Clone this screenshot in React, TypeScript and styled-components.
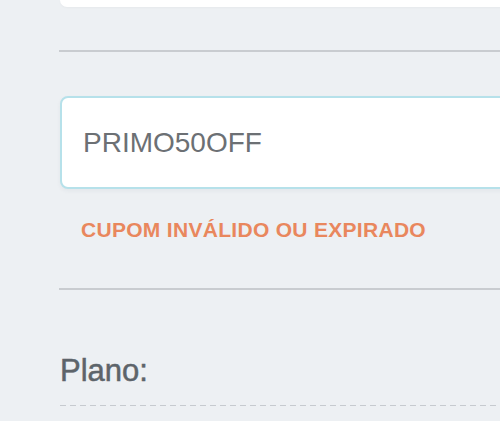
import styled, { createGlobalStyle } from 'styled-components';

const GlobalStyle = createGlobalStyle`
  html, body {
    margin: 0;
    padding: 0;
    background: #edf0f3;
  }
  body {
    font-family: 'Liberation Sans', Arial, sans-serif;
  }
`;

const Page = styled.div`
  box-sizing: border-box;
  display: flex;
  flex-direction: column;
  padding-left: 60px;
  width: 100%;
  height: 421px;
  overflow: hidden;
`;

const TopCard = styled.div`
  height: 7px;
  margin-right: -20px;
  background: #ffffff;
  border-bottom-left-radius: 8px;
  box-shadow: 0 1px 2px rgba(0, 0, 0, 0.03);
`;

const Divider = styled.hr<{ $top: number }>`
  margin: ${(p) => p.$top}px 0 0 -1px;
  height: 2px;
  border: none;
  background: #c9ccd0;
`;

const CouponInput = styled.input`
  box-sizing: border-box;
  margin: 44px -20px 0 0;
  height: 93px;
  padding: 0 0 0 21px;
  border: 2px solid #b6e1ea;
  border-radius: 8px;
  background: #ffffff;
  font-family: 'Liberation Sans', Arial, sans-serif;
  font-size: 28px;
  color: #6c7074;
  outline: none;
  box-shadow: 0 2px 4px rgba(40, 60, 80, 0.05);
`;

const ErrorText = styled.div`
  margin: 30px 0 0 21px;
  font-size: 21px;
  line-height: 21px;
  font-weight: 700;
  letter-spacing: 0.3px;
  color: #e9875d;
`;

const PlanLabel = styled.div`
  margin-top: 65px;
  font-size: 31px;
  line-height: 31px;
  color: #5d646a;
  -webkit-text-stroke: 0.5px #5d646a;
`;

const Dashed = styled.div`
  margin-top: 19px;
  height: 1px;
  background: repeating-linear-gradient(
    to right,
    #c6cacf 0 6px,
    transparent 6px 10px
  );
`;

export default function App() {
  return (
    <>
      <GlobalStyle />
      <Page>
        <TopCard />
        <Divider $top={43} />
        <CouponInput defaultValue='PRIMO50OFF' readOnly />
        <ErrorText>CUPOM INVÁLIDO OU EXPIRADO</ErrorText>
        <Divider $top={48} />
        <PlanLabel>Plano:</PlanLabel>
        <Dashed />
      </Page>
    </>
  );
}
